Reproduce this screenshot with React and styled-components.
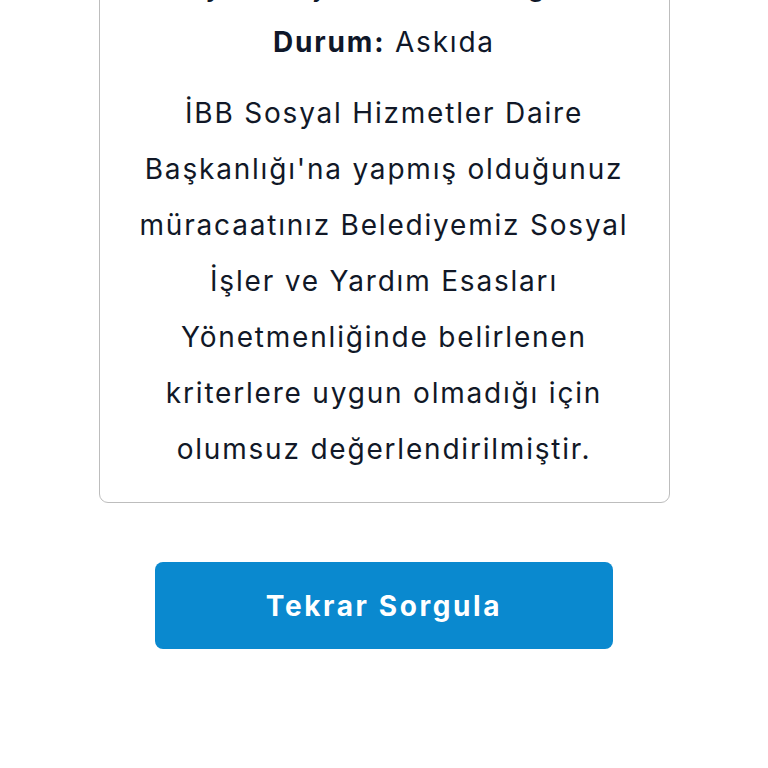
import React from "react";
import styled, { createGlobalStyle } from "styled-components";

const GlobalStyle = createGlobalStyle`
  html, body {
    margin: 0;
    padding: 0;
    background: #ffffff;
  }
  body {
    font-family: "Inter", "Noto Sans", sans-serif;
    color: #111827;
  }
`;

const StyledPage = styled.main`
  display: flex;
  flex-direction: column;
  align-items: center;
  width: 768px;
  margin-top: -67px;
`;

const StyledCard = styled.section`
  box-sizing: border-box;
  width: 571px;
  padding: 24px 6px 25px;
  border: 1px solid #bdbdbd;
  border-radius: 9px;
  background: #ffffff;
  text-align: center;
`;

const StyledRow = styled.p`
  margin: 0;
  font-size: 28px;
  line-height: 56px;
  letter-spacing: 1.8px;
  color: #0f1729;
  white-space: nowrap;

  strong {
    font-weight: 700;
  }
`;

const StyledMessage = styled.p`
  margin: 15px 0 0;
  font-size: 28px;
  line-height: 56px;
  letter-spacing: 1.8px;
  color: #111827;
`;

const StyledButton = styled.button`
  box-sizing: border-box;
  width: 458px;
  height: 87px;
  margin-top: 59px;
  border: 0;
  border-radius: 8px;
  background: #0a89cf;
  color: #ffffff;
  font-family: "Inter", "Noto Sans", sans-serif;
  font-size: 28px;
  font-weight: 700;
  letter-spacing: 2.6px;
  cursor: pointer;
`;

const MESSAGE_LINES = [
  "İBB Sosyal Hizmetler Daire",
  "Başkanlığı'na yapmış olduğunuz",
  "müracaatınız Belediyemiz Sosyal",
  "İşler ve Yardım Esasları",
  "Yönetmenliğinde belirlenen",
  "kriterlere uygun olmadığı için",
  "olumsuz değerlendirilmiştir.",
];

const App = () => {
  return (
    <>
      <GlobalStyle />
      <StyledPage>
        <StyledCard>
          <StyledRow>
            <strong>Proje:</strong> Sosyal Destek Programı
          </StyledRow>
          <StyledRow>
            <strong>Durum:</strong> Askıda
          </StyledRow>
          <StyledMessage>
            {MESSAGE_LINES.map((line, index) => (
              <React.Fragment key={index}>
                {line}
                {index < MESSAGE_LINES.length - 1 && <br />}
              </React.Fragment>
            ))}
          </StyledMessage>
        </StyledCard>
        <StyledButton type="button">Tekrar Sorgula</StyledButton>
      </StyledPage>
    </>
  );
};

export default App;
